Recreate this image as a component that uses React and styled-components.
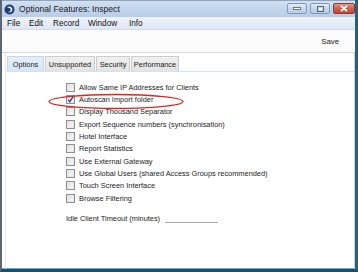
import React from 'react';
import styled, { createGlobalStyle } from 'styled-components';

const GlobalStyle = createGlobalStyle`
  html, body {
    margin: 0;
    padding: 0;
    background: #ffffff;
  }
  body {
    font-family: 'Liberation Sans', Arial, sans-serif;
  }
`;

const WindowFrame = styled.div`
  position: relative;
  width: 358px;
  height: 272px;
  box-sizing: border-box;
  display: flex;
  flex-direction: column;
  background: #ffffff;
  border-left: 2px solid #5e6673;
  border-right: 3px solid #25607e;
  border-bottom: 3px solid #1f4d64;
  box-shadow: inset -1px -1px 0 #49b8e3;
  overflow: hidden;
`;

const TitleBar = styled.div`
  height: 17px;
  display: flex;
  align-items: center;
  padding-left: 2px;
  background: linear-gradient(to bottom, #d3e1f1 0%, #c2d5ec 50%, #b8cde7 100%);
  border-top: 1px solid #8fa3bd;
  box-sizing: border-box;
`;

const TitleText = styled.span`
  margin-left: 4px;
  font-size: 8.6px;
  color: #1b1b1b;
  flex: 1;
`;

const WinButtons = styled.div`
  display: flex;
  gap: 3px;
  align-items: flex-start;
  height: 100%;
  padding-top: 2px;
  box-sizing: border-box;
`;

const WinButton = styled.div`
  width: ${({ $wide }) => ($wide ? '22px' : '20px')};
  height: 11px;
  box-sizing: border-box;
  border: 1px solid ${({ $close }) => ($close ? '#8a3a30' : '#8199b8')};
  border-radius: 2px;
  background: ${({ $close }) =>
    $close
      ? 'linear-gradient(to bottom, #e09a8c 0%, #d0604c 50%, #c04a36 100%)'
      : 'linear-gradient(to bottom, #e1eaf6 0%, #c7d7ec 50%, #b8cbe5 100%)'};
  display: flex;
  align-items: center;
  justify-content: center;
`;

const MenuBar = styled.div`
  height: 13px;
  display: flex;
  align-items: center;
  padding-left: 5px;
  background: linear-gradient(to bottom, #eef2fa 0%, #dfe7f4 100%);
  border-bottom: 1px solid #d4dcea;
  box-sizing: border-box;
`;

const MenuItem = styled.span`
  font-size: 8.2px;
  color: #111;
  width: ${({ $w }) => $w}px;
`;

const Toolbar = styled.div`
  height: 23px;
  display: flex;
  align-items: center;
  justify-content: flex-end;
  padding-right: 16px;
  background: #fbfbfb;
  border-bottom: 1px solid #d8d8d8;
  box-sizing: border-box;
`;

const ToolButton = styled.span`
  font-size: 7.8px;
  color: #222;
`;

const Body = styled.div`
  flex: 1;
  display: flex;
  flex-direction: column;
  margin-left: 3px;
  border-left: 1px solid #e6e6e6;
  border-right: 1px solid #cfcfcf;
`;

const TabStrip = styled.div`
  display: flex;
  padding: 3px 0 0 1px;
  border-bottom: 1px solid #d2e3f4;
`;

const Tab = styled.div`
  height: 15px;
  display: flex;
  align-items: center;
  justify-content: center;
  width: ${({ $w }) => $w}px;
  box-sizing: border-box;
  margin-right: 1px;
  font-size: 7.4px;
  color: #1a1a1a;
  border: 1px solid ${({ $active }) => ($active ? '#c2d7ee' : '#cdcdcd')};
  border-bottom: none;
  background: ${({ $active }) =>
    $active
      ? 'linear-gradient(to bottom, #e4eefa 0%, #d6e6f7 100%)'
      : 'linear-gradient(to bottom, #f0f0f0 0%, #e3e3e3 100%)'};
`;

const Panel = styled.div`
  flex: 1;
  padding: 9px 0 0 60px;
`;

const CheckList = styled.div`
  display: flex;
  flex-direction: column;
`;

const CheckRow = styled.div`
  height: 12.33px;
  display: flex;
  align-items: center;
  gap: 4px;
`;

const Box = styled.span`
  width: 9px;
  height: 9px;
  box-sizing: border-box;
  border: 1px solid #8e8f8f;
  background: linear-gradient(135deg, #dcdcdc 0%, #f4f4f4 70%, #ffffff 100%);
  box-shadow: inset 0 0 0 1px #e8e8e8;
  position: relative;
`;

const Label = styled.span`
  font-size: 7.4px;
  color: #1c1c1c;
  white-space: nowrap;
`;

const FieldRow = styled.div`
  display: flex;
  align-items: flex-end;
  margin-top: 7px;
  height: 12px;
`;

const FieldLabel = styled.span`
  font-size: 7.4px;
  color: #1c1c1c;
  width: 99px;
  line-height: 9px;
`;

const FieldLine = styled.span`
  width: 53px;
  border-bottom: 1px solid #a8a8a8;
  height: 9px;
`;

const Annotation = styled.svg`
  position: absolute;
  left: 0;
  top: 0;
  pointer-events: none;
`;

const AppIcon = () => (
  <svg width="11" height="11" viewBox="0 0 11 11">
    <circle cx="5.5" cy="5.5" r="5" fill="#1f3f74" />
    <path d="M3 3.2 C5 1.8 8 2.6 8.4 5.2 C8.6 7.6 6 9 4 8 C6 8 7.4 6.6 6.6 5 C5.8 3.6 4 3.6 3 3.2 Z" fill="#ffffff" />
  </svg>
);

const Check = () => (
  <svg width="9" height="9" viewBox="0 0 9 9" style={{ position: 'absolute', left: -1, top: -1 }}>
    <path d="M2.2 4.6 L3.8 6.6 L7 1.8" stroke="#2a3f9a" strokeWidth="1.4" fill="none" />
  </svg>
);

const options = [
  { label: 'Allow Same IP Addresses for Clients' },
  { label: 'Autoscan Import folder', checked: true },
  { label: 'Display Thousand Separator' },
  { label: 'Export Sequence numbers (synchronisation)' },
  { label: 'Hotel Interface' },
  { label: 'Report Statistics' },
  { label: 'Use External Gateway' },
  { label: 'Use Global Users (shared Access Groups recommended)' },
  { label: 'Touch Screen Interface' },
  { label: 'Browse Filtering' },
];

const tabs = [
  { label: 'Options', w: 37, active: true },
  { label: 'Unsupported', w: 50 },
  { label: 'Security', w: 34 },
  { label: 'Performance', w: 48 },
];

const menus = [
  { label: 'File', w: 22 },
  { label: 'Edit', w: 24 },
  { label: 'Record', w: 35 },
  { label: 'Window', w: 41 },
  { label: 'Info', w: 20 },
];

export default function App() {
  return (
    <>
      <GlobalStyle />
      <WindowFrame>
        <TitleBar>
          <AppIcon />
          <TitleText>Optional Features: Inspect</TitleText>
          <WinButtons>
            <WinButton>
              <svg width="8" height="3" viewBox="0 0 8 3">
                <rect x="0.5" y="0.5" width="7" height="2" fill="#ffffff" stroke="#4a5a70" strokeWidth="0.8" />
              </svg>
            </WinButton>
            <WinButton>
              <svg width="7" height="6" viewBox="0 0 7 6">
                <rect x="0.5" y="0.5" width="6" height="5" fill="none" stroke="#4a5a70" strokeWidth="0.9" />
                <rect x="2" y="2" width="3" height="2" fill="#ffffff" />
              </svg>
            </WinButton>
            <WinButton $close $wide>
              <svg width="8" height="7" viewBox="0 0 8 7">
                <path d="M1 0.8 L7 6.2 M7 0.8 L1 6.2" stroke="#ffffff" strokeWidth="1.8" />
              </svg>
            </WinButton>
          </WinButtons>
        </TitleBar>
        <MenuBar>
          {menus.map(m => (
            <MenuItem key={m.label} $w={m.w}>
              {m.label}
            </MenuItem>
          ))}
        </MenuBar>
        <Toolbar>
          <ToolButton>Save</ToolButton>
        </Toolbar>
        <Body>
          <TabStrip>
            {tabs.map(t => (
              <Tab key={t.label} $w={t.w} $active={t.active}>
                {t.label}
              </Tab>
            ))}
          </TabStrip>
          <Panel>
            <CheckList>
              {options.map(o => (
                <CheckRow key={o.label}>
                  <Box>{o.checked && <Check />}</Box>
                  <Label>{o.label}</Label>
                </CheckRow>
              ))}
            </CheckList>
            <FieldRow>
              <FieldLabel>Idle Client Timeout (minutes)</FieldLabel>
              <FieldLine />
            </FieldRow>
          </Panel>
        </Body>
        <Annotation width="358" height="272" viewBox="0 0 358 272">
          <ellipse cx="114" cy="101.5" rx="67" ry="7" fill="none" stroke="#e0231f" strokeWidth="1.3" />
        </Annotation>
      </WindowFrame>
    </>
  );
}
